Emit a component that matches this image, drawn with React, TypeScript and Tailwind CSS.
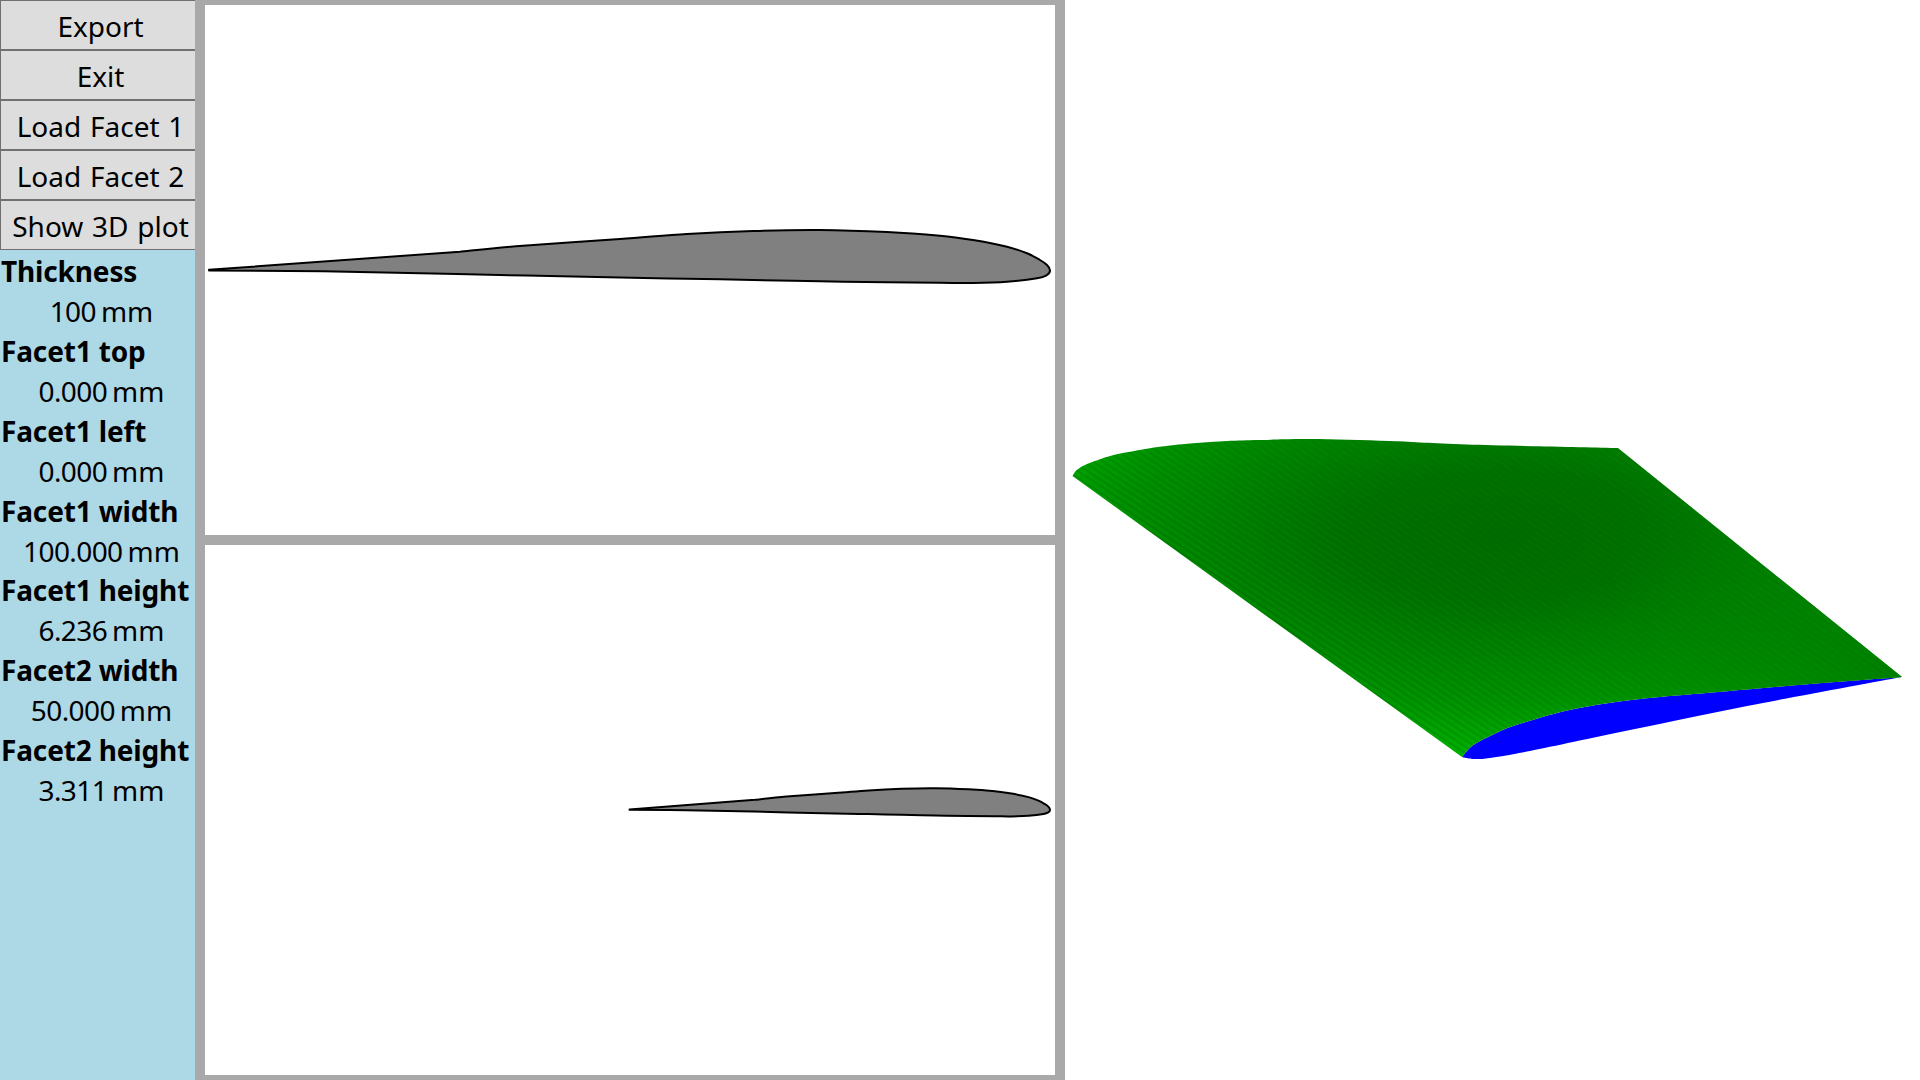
type P = [number, number];

function spline(pts: P[]) {
  let d = "";
  for (let i = 0; i < pts.length - 1; i++) {
    const p0 = pts[Math.max(i - 1, 0)];
    const p1 = pts[i];
    const p2 = pts[i + 1];
    const p3 = pts[Math.min(i + 2, pts.length - 1)];
    const c1 = [p1[0] + (p2[0] - p0[0]) / 6, p1[1] + (p2[1] - p0[1]) / 6];
    const c2 = [p2[0] - (p3[0] - p1[0]) / 6, p2[1] - (p3[1] - p1[1]) / 6];
    d += ` C${c1[0].toFixed(1)} ${c1[1].toFixed(1)} ${c2[0].toFixed(1)} ${c2[1].toFixed(1)} ${p2[0]} ${p2[1]}`;
  }
  return d;
}

const FOIL =
  "M209 269.8 L460 251.7" +
  spline([[460, 251.7], [523, 245.7], [620, 239], [687, 234], [753, 231], [820, 230], [887, 232], [940, 235.7], [973, 240], [1007, 246.7], [1027, 253.3], [1040, 260], [1047, 265], [1050, 270.3], [1047, 275], [1037, 278.3], [1007, 281.7], [973, 283], [940, 282.8], [887, 282.3], [820, 281.3], [753, 280], [687, 278.7], [620, 277.6], [457, 274], [323, 271.3], [209, 270.4]]) +
  " Z";

const buttons = ["Export", "Exit", "Load Facet 1", "Load Facet 2", "Show 3D plot"];
const values: [string, string][] = [
  ["Thickness", "100"],
  ["Facet1 top", "0.000"],
  ["Facet1 left", "0.000"],
  ["Facet1 width", "100.000"],
  ["Facet1 height", "6.236"],
  ["Facet2 width", "50.000"],
  ["Facet2 height", "3.311"],
];

const MID: P[] = [[1902, 677], [1810, 684], [1718, 692], [1660, 697], [1609, 703], [1565, 711], [1526, 722], [1505, 729], [1488, 737], [1472, 746], [1462, 757]];
const WING =
  "M1072.5 476" +
  spline([[1072.5, 476], [1076.7, 470], [1085, 465], [1093, 461.7], [1110, 456], [1127, 452.3], [1160, 446.7], [1193, 443.3], [1227, 441], [1260, 440], [1310, 439], [1390, 441], [1467, 444.5], [1618, 448]]) +
  " L1902 677" +
  spline(MID) +
  " Z";
const BLUE =
  "M1902 677" +
  spline(MID) +
  spline([[1462, 757], [1473, 759], [1490, 758], [1530, 751], [1630, 730], [1763, 703], [1902, 677]]) +
  " Z";

const stripes = Array.from({ length: 120 }, (_, i) => i);

function Foil({ transform }: { transform?: string }) {
  return (
    <path d={FOIL} transform={transform} fill="#808080" stroke="#000" strokeWidth="2" strokeLinejoin="round" vectorEffect="non-scaling-stroke" />
  );
}

export default function App() {
  return (
    <div className="flex h-screen w-[1920px] overflow-hidden bg-white text-black font-['Noto_Sans','Open_Sans',sans-serif]">
      <aside className="flex w-[195px] shrink-0 flex-col bg-[#add8e6]">
        {buttons.map((b) => (
          <div key={b} className="flex h-[50px] items-center justify-center border border-r-0 border-[#707070] bg-[#dddddd] pt-[1px] pl-[5px] text-[28px] leading-none whitespace-nowrap [word-spacing:1.5px]">
            {b}
          </div>
        ))}
        {values.map(([label, v]) => (
          <div key={label}>
            <div className="flex h-[39.95px] items-center pl-px pt-[2px] text-[28px] font-bold leading-none whitespace-nowrap tracking-[-0.15px]">{label}</div>
            <div className="flex h-[39.95px] items-center justify-center pl-[8px] pt-[2px] text-[28px] leading-none whitespace-nowrap">
              <span className="tracking-[-0.6px]">{v}</span>
              <span className="ml-[5px]">mm</span>
            </div>
          </div>
        ))}
      </aside>

      <main className="flex w-[870px] shrink-0 flex-col gap-[10px] bg-[#a9a9a9] px-[10px] py-[5px]">
        <div className="h-[530px] bg-white">
          <svg width="850" height="530" viewBox="205 5 850 530" className="block">
            <Foil />
          </svg>
        </div>
        <div className="h-[530px] bg-white">
          <svg width="850" height="530" viewBox="205 545 850 530" className="block">
            <Foil transform="translate(1050 809.5) scale(0.5 0.53) translate(-1050 -270)" />
          </svg>
        </div>
      </main>

      <section className="flex-1 bg-white">
        <svg width="855" height="1080" viewBox="1065 0 855 1080" className="block">
          <defs>
            <radialGradient id="base" gradientUnits="userSpaceOnUse" cx="0" cy="0" r="520" gradientTransform="translate(1500 535) scale(1 0.42)">
              <stop offset="0" stopColor="#006c00" />
              <stop offset="0.3" stopColor="#007200" />
              <stop offset="0.55" stopColor="#008400" />
              <stop offset="0.75" stopColor="#009200" />
              <stop offset="1" stopColor="#00ae00" />
            </radialGradient>
            <radialGradient id="rightTip" gradientUnits="userSpaceOnUse" cx="1902" cy="677" r="320">
              <stop offset="0" stopColor="#007c00" stopOpacity="0.95" />
              <stop offset="1" stopColor="#007c00" stopOpacity="0" />
            </radialGradient>
            <clipPath id="wing">
              <path d={WING} />
            </clipPath>
          </defs>
          <path d={BLUE} fill="#0000ff" />
          <path d={WING} fill="url(#base)" />
          <path d={WING} fill="url(#rightTip)" />
          <g clipPath="url(#wing)" stroke="#000" strokeWidth="1.6">
            {stripes.map((i) => {
              const c = 190 - i * 6.6;
              const op = 0.04 + 0.13 * Math.max(0, 1 - i / 60);
              return <line key={i} x1="1065" y1={476 + 0.66 * (1065 - 1073) + c} x2="1920" y2={476 + 0.66 * (1920 - 1073) + c} strokeOpacity={op} />;
            })}
          </g>
        </svg>
      </section>
    </div>
  );
}
